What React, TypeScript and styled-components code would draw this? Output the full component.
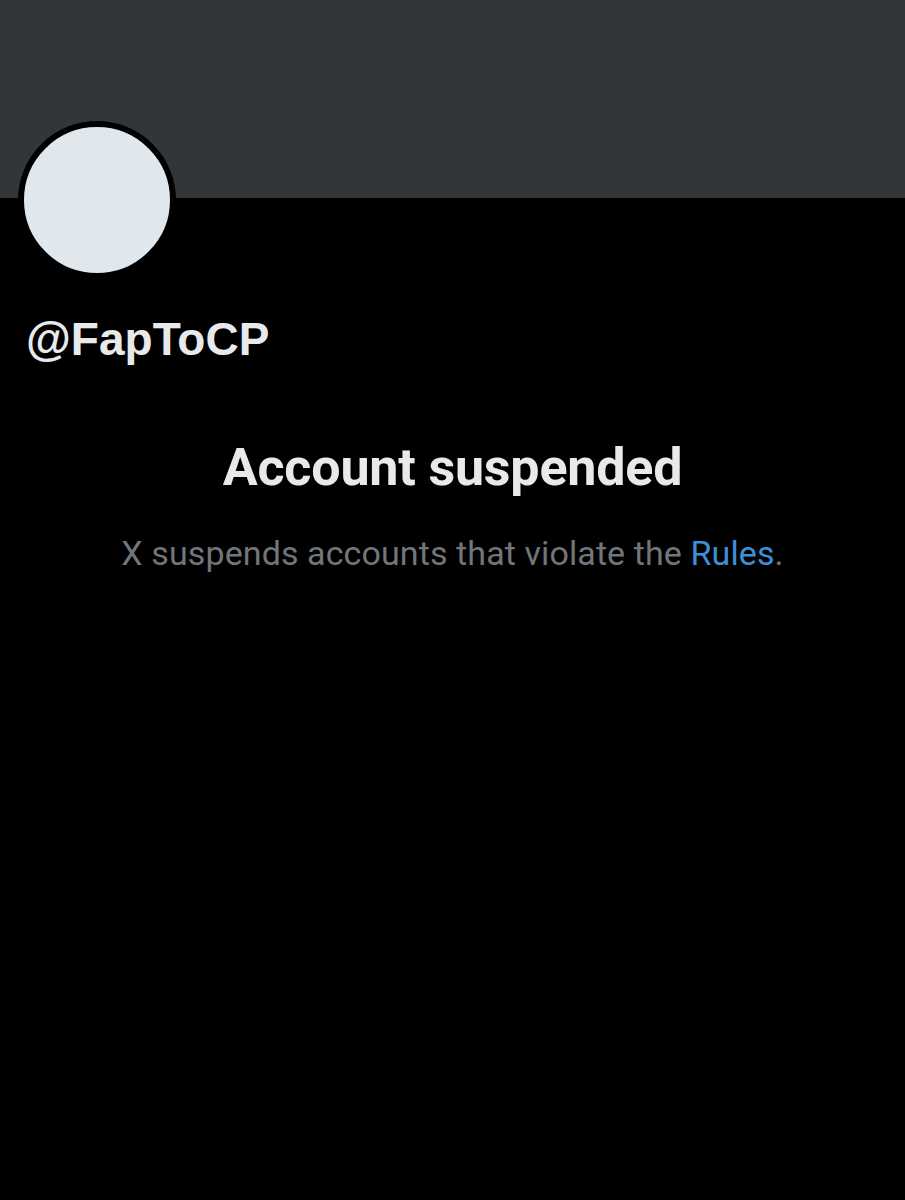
import React from "react";
import styled, { createGlobalStyle } from "styled-components";

const GlobalStyle = createGlobalStyle`
  html, body {
    margin: 0;
    padding: 0;
    background-color: #000000;
  }
  body {
    font-family: Roboto, "Liberation Sans", sans-serif;
  }
`;

const Page = styled.div`
  width: 905px;
  min-height: 1200px;
  background-color: #000000;
  display: flex;
  flex-direction: column;
`;

const Banner = styled.div`
  width: 100%;
  height: 198px;
  background-color: #333639;
`;

const ProfileHead = styled.div`
  padding: 0 0 0 18px;
`;

const Avatar = styled.div`
  width: 146px;
  height: 146px;
  margin-top: -77px;
  border-radius: 50%;
  border: 6px solid #000000;
  background-color: #e1e8ed;
  position: relative;
`;

const Handle = styled.div`
  margin: 34px 0 0 8px;
  font-family: "Liberation Sans", Arial, sans-serif;
  font-weight: 700;
  font-size: 46px;
  line-height: 52px;
  color: #e7e9ea;
`;

const Notice = styled.div`
  display: flex;
  flex-direction: column;
  align-items: center;
  margin-top: 74px;
`;

const Title = styled.h1`
  margin: 0;
  font-family: Roboto, "Noto Sans", sans-serif;
  font-weight: 700;
  font-size: 52px;
  line-height: 58px;
  letter-spacing: -0.2px;
  color: #e7e9ea;
`;

const Subtitle = styled.p`
  margin: 35px 0 0 0;
  font-family: Roboto, "Noto Sans", sans-serif;
  font-weight: 400;
  font-size: 34px;
  line-height: 42px;
  letter-spacing: 0.1px;
  color: #71767b;
`;

const RulesLink = styled.a`
  color: #3e8fd6;
  text-decoration: none;
`;

const App: React.FunctionComponent = () => (
  <>
    <GlobalStyle />
    <Page>
      <Banner />
      <ProfileHead>
        <Avatar />
        <Handle>@FapToCP</Handle>
      </ProfileHead>
      <Notice>
        <Title>Account suspended</Title>
        <Subtitle>
          X suspends accounts that violate the <RulesLink href="#">Rules</RulesLink>.
        </Subtitle>
      </Notice>
    </Page>
  </>
);

export default App;
